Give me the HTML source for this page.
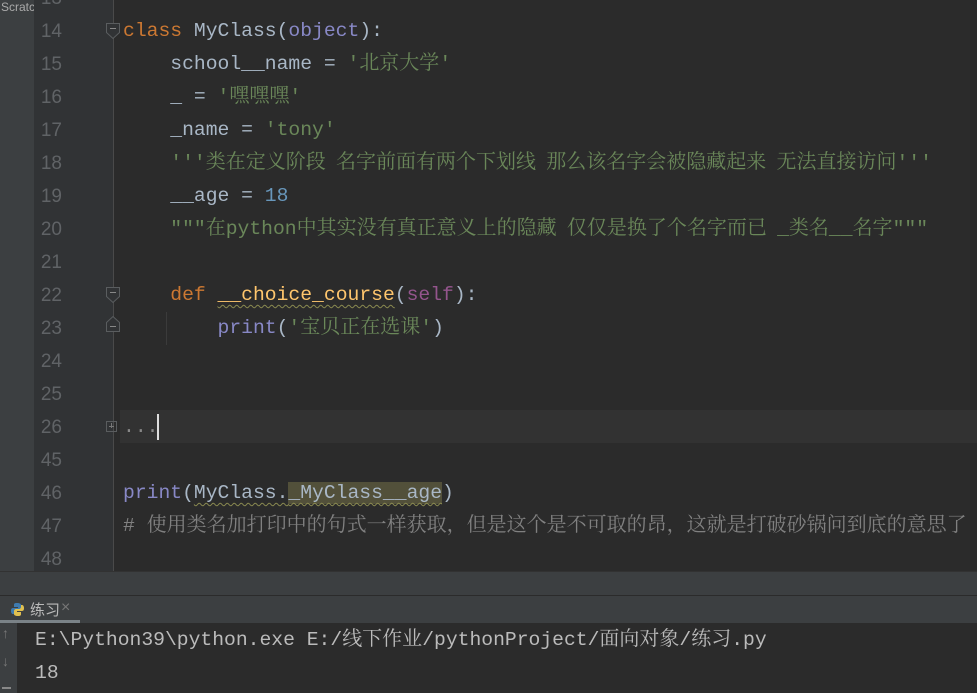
<!DOCTYPE html>
<html><head><meta charset="utf-8"><style>
html,body{margin:0;padding:0;width:977px;height:693px;overflow:hidden;background:#2b2b2b;}
.left{position:absolute;left:0;top:0;width:34px;height:571px;background:#3c3f41;}
.left span{position:absolute;left:1px;top:0;font:12px "Liberation Sans",sans-serif;color:#aaa;white-space:nowrap;width:33px;overflow:hidden;}
.gut{position:absolute;left:34px;top:0;width:80px;height:571px;background:#313335;}
.gline{position:absolute;left:113px;top:0;width:1px;height:571px;background:#4a4a4a;}
.ed{position:absolute;left:114px;top:0;width:863px;height:571px;background:#2b2b2b;}
.cur{position:absolute;left:120px;top:410px;width:857px;height:33px;background:#323232;}
.row{position:absolute;left:0;height:33px;line-height:33px;font-family:"Liberation Mono",monospace;font-size:19.7px;white-space:pre;color:#a9b7c6;}
.ln{position:absolute;left:34px;width:28px;text-align:right;height:33px;line-height:33px;font-family:"Liberation Sans",sans-serif;font-size:19px;color:#606366;}
.c{font-family:"Noto Serif CJK SC","Noto Sans CJK SC",serif;font-size:20px;line-height:0;}
.k{color:#cc7832}.s{color:#6a8759}.n{color:#6897bb}.b{color:#8888c6}.sf{color:#94558d}.f{color:#ffc66d}.cm{color:#808080}
.wv{text-decoration:underline wavy #8a8a50;text-decoration-thickness:1px;text-underline-offset:4px}
.hl{background:#52503a}
.fold{position:absolute;width:11px;height:11px;border:1px solid #5a5d5f;box-sizing:border-box;}
.fold:after{content:"";position:absolute;left:2px;top:4px;width:5px;height:1px;background:#777;}
.strip{position:absolute;left:0;top:571px;width:977px;height:24px;background:#3c3f41;border-top:1px solid #323232;}
.tabs{position:absolute;left:0;top:595px;width:977px;height:27px;background:#3c3f41;border-top:1px solid #2b2b2b;}
.tabu{position:absolute;left:0;top:620px;width:80px;height:3px;background:#7a8287;}
.con{position:absolute;left:17px;top:623px;width:960px;height:70px;background:#2b2b2b;}
.ctb{position:absolute;left:0;top:623px;width:17px;height:70px;background:#3c3f41;}
.ct{position:absolute;left:35px;height:33px;line-height:33px;font-family:"Liberation Mono",monospace;font-size:19.7px;color:#bbbbbb;white-space:pre;}
</style></head><body>
<div class="left"><span>Scratc</span></div>
<div class="gut"></div>
<div class="ed"></div>
<div class="cur"></div>
<div class="gline"></div>
<div class="ln" style="top:-18px">13</div>
<div class="ln" style="top:15px">14</div>
<div class="ln" style="top:48px">15</div>
<div class="ln" style="top:81px">16</div>
<div class="ln" style="top:114px">17</div>
<div class="ln" style="top:147px">18</div>
<div class="ln" style="top:180px">19</div>
<div class="ln" style="top:213px">20</div>
<div class="ln" style="top:246px">21</div>
<div class="ln" style="top:279px">22</div>
<div class="ln" style="top:312px">23</div>
<div class="ln" style="top:345px">24</div>
<div class="ln" style="top:378px">25</div>
<div class="ln" style="top:411px">26</div>
<div class="ln" style="top:444px">45</div>
<div class="ln" style="top:477px">46</div>
<div class="ln" style="top:510px">47</div>
<div class="ln" style="top:543px">48</div>
<svg style="position:absolute;left:105px;top:22px" width="16" height="20"><path d="M1.5 1.5h13v9l-6.5 6l-6.5-6z" fill="#313335" stroke="#5a5d5f"/><path d="M5 6.5h6" stroke="#888"/></svg>
<svg style="position:absolute;left:105px;top:286px" width="16" height="20"><path d="M1.5 1.5h13v9l-6.5 6l-6.5-6z" fill="#313335" stroke="#5a5d5f"/><path d="M5 6.5h6" stroke="#888"/></svg>
<svg style="position:absolute;left:105px;top:313px" width="16" height="20"><path d="M1.5 18.5h13v-9l-6.5-6l-6.5 6z" fill="#313335" stroke="#5a5d5f"/><path d="M5 13.5h6" stroke="#888"/></svg>
<div class="fold" style="left:106px;top:421px"></div>
<div style="position:absolute;left:111px;top:423px;width:1px;height:5px;background:#777"></div>
<div style="position:absolute;left:166px;top:312px;width:1px;height:33px;background:#3b3b3b"></div>

<div class="row" style="left:123px;top:15px"><span class="k">class</span> MyClass(<span class="b">object</span>):</div>
<div class="row" style="left:123px;top:48px">    school__name = <span class="s">'<span class="c">北京大学</span>'</span></div>
<div class="row" style="left:123px;top:81px">    _ = <span class="s">'<span class="c">嘿嘿嘿</span>'</span></div>
<div class="row" style="left:123px;top:114px">    _name = <span class="s">'tony'</span></div>
<div class="row" style="left:123px;top:147px">    <span class="s">'''<span class="c">类在定义阶段  名字前面有两个下划线  那么该名字会被隐藏起来  无法直接访问</span>'''</span></div>
<div class="row" style="left:123px;top:180px">    __age = <span class="n">18</span></div>
<div class="row" style="left:123px;top:213px">    <span class="s">"""<span class="c">在</span>python<span class="c">中其实没有真正意义上的隐藏  仅仅是换了个名字而已  </span>_<span class="c">类名</span>__<span class="c">名字</span>"""</span></div>
<div class="row" style="left:123px;top:279px">    <span class="k">def</span> <span class="f wv">__choice_course</span>(<span class="sf">self</span>):</div>
<div class="row" style="left:123px;top:312px">        <span class="b">print</span>(<span class="s">'<span class="c">宝贝正在选课</span>'</span>)</div>
<div class="row" style="left:123px;top:411px;color:#888">...</div>
<div style="position:absolute;left:157px;top:414px;width:2px;height:26px;background:#ddd"></div>
<div class="row" style="left:123px;top:477px"><span class="b">print</span>(<span class="wv">MyClass.<span class="hl">_MyClass__age</span></span>)</div>
<div class="row" style="left:123px;top:510px"><span class="cm"># <span class="c">使用类名加打印中的句式一样获取，但是这个是不可取的昂，这就是打破砂锅问到底的意思了</span></span></div>

<div class="strip"></div>
<div class="tabs">
<svg style="position:absolute;left:10px;top:6px" width="15" height="15" viewBox="0 0 15 15"><path d="M7 1c-3 0-3 1-3 2v2h4v1H3C1 6 1 8 1 9c0 2 1 3 2 3h1v-2c0-1 1-2 2-2h3c1 0 2-1 2-2V3c0-1-1-2-4-2z" fill="#3e7bb0"/><path d="M8 14c3 0 3-1 3-2v-2H7V9h5c2 0 2-2 2-3 0-2-1-3-2-3h-1v2c0 1-1 2-2 2H6c-1 0-2 1-2 2v3c0 1 1 2 4 2z" fill="#e0c050"/></svg>
<span style="position:absolute;left:30px;top:3px;font:15px 'Liberation Sans','Noto Sans CJK SC',sans-serif;color:#bbb">练习</span>
<span style="position:absolute;left:61px;top:3px;font:16px 'Liberation Sans',sans-serif;color:#777">×</span>
</div>
<div class="tabu"></div>
<div class="con"></div>
<div class="ctb"><span style="position:absolute;left:2px;top:2px;color:#777;font:14px 'Liberation Sans',sans-serif">↑</span><span style="position:absolute;left:2px;top:30px;color:#777;font:14px 'Liberation Sans',sans-serif">↓</span><div style="position:absolute;left:2px;top:64px;width:9px;height:2px;background:#888"></div></div>
<div class="ct" style="top:624px">E:\Python39\python.exe E:/<span class="c">线下作业</span>/pythonProject/<span class="c">面向对象</span>/<span class="c">练习</span>.py</div>
<div class="ct" style="top:657px">18</div>
</body></html>
